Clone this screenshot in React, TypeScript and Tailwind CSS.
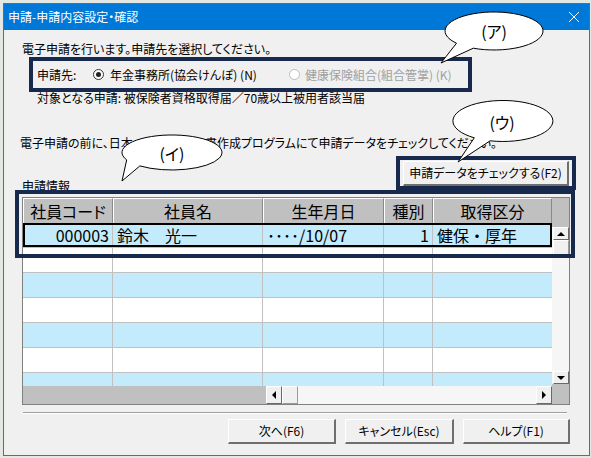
import React from 'react';

const COLS = [
  { label: '社員コード', w: 'w-[90px]' },
  { label: '社員名', w: 'w-[150px]' },
  { label: '生年月日', w: 'w-[121px]' },
  { label: '種別', w: 'w-[49px]' },
  { label: '取得区分', w: 'w-[119px]' },
];

const FILLER_ROWS = ['bg-white', 'bg-[#c4ebfc]', 'bg-white', 'bg-[#c4ebfc]', 'bg-white', 'bg-[#c4ebfc]'];

const Radio: React.FC<{ checked?: boolean; disabled?: boolean }> = ({ checked, disabled }) => (
  <span
    className={
      'w-[11px] h-[11px] rounded-full border bg-white flex items-center justify-center shrink-0 ' +
      (disabled ? 'border-[#bcbcbc]' : 'border-[#333333]')
    }
  >
    {checked && <span className="w-[5px] h-[5px] rounded-full bg-[#222222]" />}
  </span>
);

const Arrow: React.FC<{ dir: 'up' | 'down' | 'left' | 'right' }> = ({ dir }) => {
  if (dir === 'up')
    return <span className="w-0 h-0 border-l-[4px] border-r-[4px] border-b-[4px] border-l-transparent border-r-transparent border-b-black" />;
  if (dir === 'down')
    return <span className="w-0 h-0 border-l-[4px] border-r-[4px] border-t-[4px] border-l-transparent border-r-transparent border-t-black" />;
  if (dir === 'left')
    return <span className="w-0 h-0 border-t-[4px] border-b-[4px] border-r-[4px] border-t-transparent border-b-transparent border-r-black" />;
  return <span className="w-0 h-0 border-t-[4px] border-b-[4px] border-l-[4px] border-t-transparent border-b-transparent border-l-black" />;
};

const ScrollBtn: React.FC<{ dir: 'up' | 'down' | 'left' | 'right'; className: string }> = ({ dir, className }) => (
  <div
    className={
      'flex items-center justify-center bg-[#f0f0f0] border border-t-white border-l-white border-r-[#696969] border-b-[#696969] shrink-0 ' +
      className
    }
  >
    <Arrow dir={dir} />
  </div>
);

const DlgButton: React.FC<{ children: React.ReactNode; className: string }> = ({ children, className }) => (
  <button
    className={
      'h-[25px] bg-[#f0f0f0] border border-t-white border-l-white border-r-2 border-b-2 border-r-[#6f6f6f] border-b-[#6f6f6f] text-[12px] text-black flex items-center justify-center ' +
      className
    }
  >
    {children}
  </button>
);

export default function App() {
  return (
    <div className="relative w-[591px] h-[458px] overflow-hidden bg-[#e3e8e3] pt-[3px] pl-[3px] font-['Noto_Sans_CJK_JP',sans-serif] [font-feature-settings:'palt'] text-black">
      <div className="w-[587px] h-[453px] border border-[#2b79c2] flex flex-col">
        {/* title bar */}
        <div className="h-[26px] bg-[#0078d7] flex items-center justify-between pl-[4px] pr-[6px] text-white text-[12px]">
          <span>申請-申請内容設定・確認</span>
          <svg width="12" height="12" viewBox="0 0 12 12" className="mr-[3px]">
            <path d="M1 1 L11 11 M11 1 L1 11" stroke="white" strokeWidth="1" />
          </svg>
        </div>

        {/* body */}
        <div className="relative flex-1 bg-[#f0f0f0] flex flex-col text-[12px]">
          <div className="mt-[12px] h-[14px] leading-[14px] pl-[18px]">電子申請を行います。申請先を選択してください。</div>

          <div className="mt-[1px] ml-[25px] w-[443px] h-[35px] border-4 border-[#172a4d] flex items-center pl-[4px]">
            <span className="w-[56px]">申請先:</span>
            <label className="w-[196px] flex items-center gap-[6px]">
              <Radio checked />
              <span>年金事務所(協会けんぽ) (N)</span>
            </label>
            <label className="flex items-center gap-[5px] text-[#a0a0a0]">
              <Radio disabled />
              <span>健康保険組合(組合管掌) (K)</span>
            </label>
          </div>

          <div className="mt-[-1px] h-[14px] leading-[14px] pl-[33px]">対象となる申請: 被保険者資格取得届／70歳以上被用者該当届</div>

          {/* the middle of this sentence lies under callout (イ) */}
          <div className="mt-[31px] h-[14px] leading-[14px] pl-[16px] flex">
            <span className="w-[185px] shrink-0">電子申請の前に、日本</span>
            <span>書作成プログラムにて申請データをチェックしてください。</span>
          </div>

          <div className="mt-[6px] h-[34px] flex justify-between items-start">
            <span className="mt-[23px] h-[14px] leading-[14px] pl-[18px]">申請情報</span>
            <div className="mr-[13px] w-[180px] h-[34px] border-4 border-[#172a4d] flex items-center justify-center">
              <DlgButton className="w-[166px] h-[23px]">申請データをチェックする(F2)</DlgButton>
            </div>
          </div>

          {/* grid */}
          <div className="mt-[7px] ml-[18px] w-[548px] h-[208px] border border-[#808080] flex flex-col bg-[#f0f0f0]">
            <div className="h-[25px] flex bg-[#c0c0c0] text-[16px]">
              {COLS.map((c) => (
                <div
                  key={c.label}
                  className={c.w + ' border-t border-l border-t-white border-l-white border-r border-r-[#8a8a8a] flex items-center justify-center'}
                >
                  {c.label}
                </div>
              ))}
              <div className="flex-1" />
            </div>

            <div className="h-[163px] flex">
              <div className="w-[529px] h-[163px] overflow-hidden flex flex-col text-[16px]">
                <div className="relative h-[25px] shrink-0 flex bg-[#c4ebfc] border-b border-[#c0c0c0]">
                  <div className="w-[90px] border-r border-[#c0c0c0] flex items-center justify-end pr-[3px]">000003</div>
                  <div className="w-[150px] border-r border-[#c0c0c0] flex items-center pl-[4px]">鈴木　光一</div>
                  <div className="w-[121px] border-r border-[#c0c0c0] flex items-center pl-[4px]">････/10/07</div>
                  <div className="w-[49px] border-r border-[#c0c0c0] flex items-center justify-end pr-[3px]">1</div>
                  <div className="w-[119px] flex items-center pl-[4px] [font-feature-settings:normal]">健保・厚年</div>
                  <div className="absolute inset-0 border-2 border-black" />
                </div>
                {FILLER_ROWS.map((bg, i) => (
                  <div key={i} className={'h-[25px] shrink-0 flex border-b border-[#c0c0c0] ' + bg}>
                    {COLS.map((c, j) => (
                      <div key={c.label} className={c.w + (j < 4 ? ' border-r border-[#c0c0c0]' : '')} />
                    ))}
                  </div>
                ))}
              </div>

              {/* vertical scrollbar */}
              <div className="w-[17px] h-[163px] flex flex-col bg-[#f6f6f6]">
                <div className="h-[4px] bg-[#c0c0c0] shrink-0" />
                <ScrollBtn dir="up" className="h-[13px] w-[16px] ml-[1px]" />
                <div className="h-[17px] w-[16px] ml-[1px] bg-[#f0f0f0] border border-t-white border-l-white border-r-[#9a9a9a] border-b-[#9a9a9a] shrink-0" />
                <div className="flex-1" />
                <ScrollBtn dir="down" className="h-[13px] w-[16px] ml-[1px]" />
                <div className="h-[2px] bg-[#c0c0c0] shrink-0" />
              </div>
            </div>

            {/* horizontal scrollbar */}
            <div className="h-[18px] flex">
              <div className="w-[243px] bg-[#c0c0c0]" />
              <ScrollBtn dir="left" className="w-[16px] h-[18px]" />
              <div className="w-[16px] h-[18px] bg-[#f0f0f0] border border-t-white border-l-white border-r-[#9a9a9a] border-b-[#9a9a9a]" />
              <div className="w-[238px] bg-[#f6f6f6]" />
              <ScrollBtn dir="right" className="w-[16px] h-[18px]" />
              <div className="w-[17px] bg-[#c0c0c0]" />
            </div>
          </div>

          <div className="mt-[7px] ml-[19px] w-[544px] border-t border-b border-t-[#a0a0a0] border-b-white" />

          <div className="mt-[5px] flex justify-end pr-[19px] gap-[9px]">
            <DlgButton className="w-[108px]">次へ(F6)</DlgButton>
            <DlgButton className="w-[109px]">キャンセル(Esc)</DlgButton>
            <DlgButton className="w-[107px]">ヘルプ(F1)</DlgButton>
          </div>

          {/* (イ) highlight over the grid */}
          <div className="absolute left-[11px] top-[160px] w-[560px] h-[68px] border-4 border-[#172a4d] pointer-events-none" />
        </div>
      </div>

      {/* callouts */}
      <svg className="absolute left-0 top-0 pointer-events-none" width="591" height="458" viewBox="0 0 591 458">
        <path d="M473.3 48.2 A49 19 0 1 0 456.5 43.2 L441 63 Z" fill="white" stroke="black" strokeWidth="1" />
        <path d="M139.9 165.9 A50 17.5 0 1 0 126.7 159.9 L122 181 Z" fill="white" stroke="black" strokeWidth="1" />
        <path d="M490.1 140.8 A50 20.5 0 1 0 474.3 137.8 L458 162 Z" fill="white" stroke="black" strokeWidth="1" />
      </svg>
      <div className="absolute left-[474px] top-[21px] w-[40px] h-[20px] leading-[20px] text-center text-[16px]">(ア)</div>
      <div className="absolute left-[152px] top-[143px] w-[40px] h-[20px] leading-[20px] text-center text-[16px]">(イ)</div>
      <div className="absolute left-[482px] top-[112px] w-[40px] h-[20px] leading-[20px] text-center text-[16px]">(ウ)</div>
    </div>
  );
}
